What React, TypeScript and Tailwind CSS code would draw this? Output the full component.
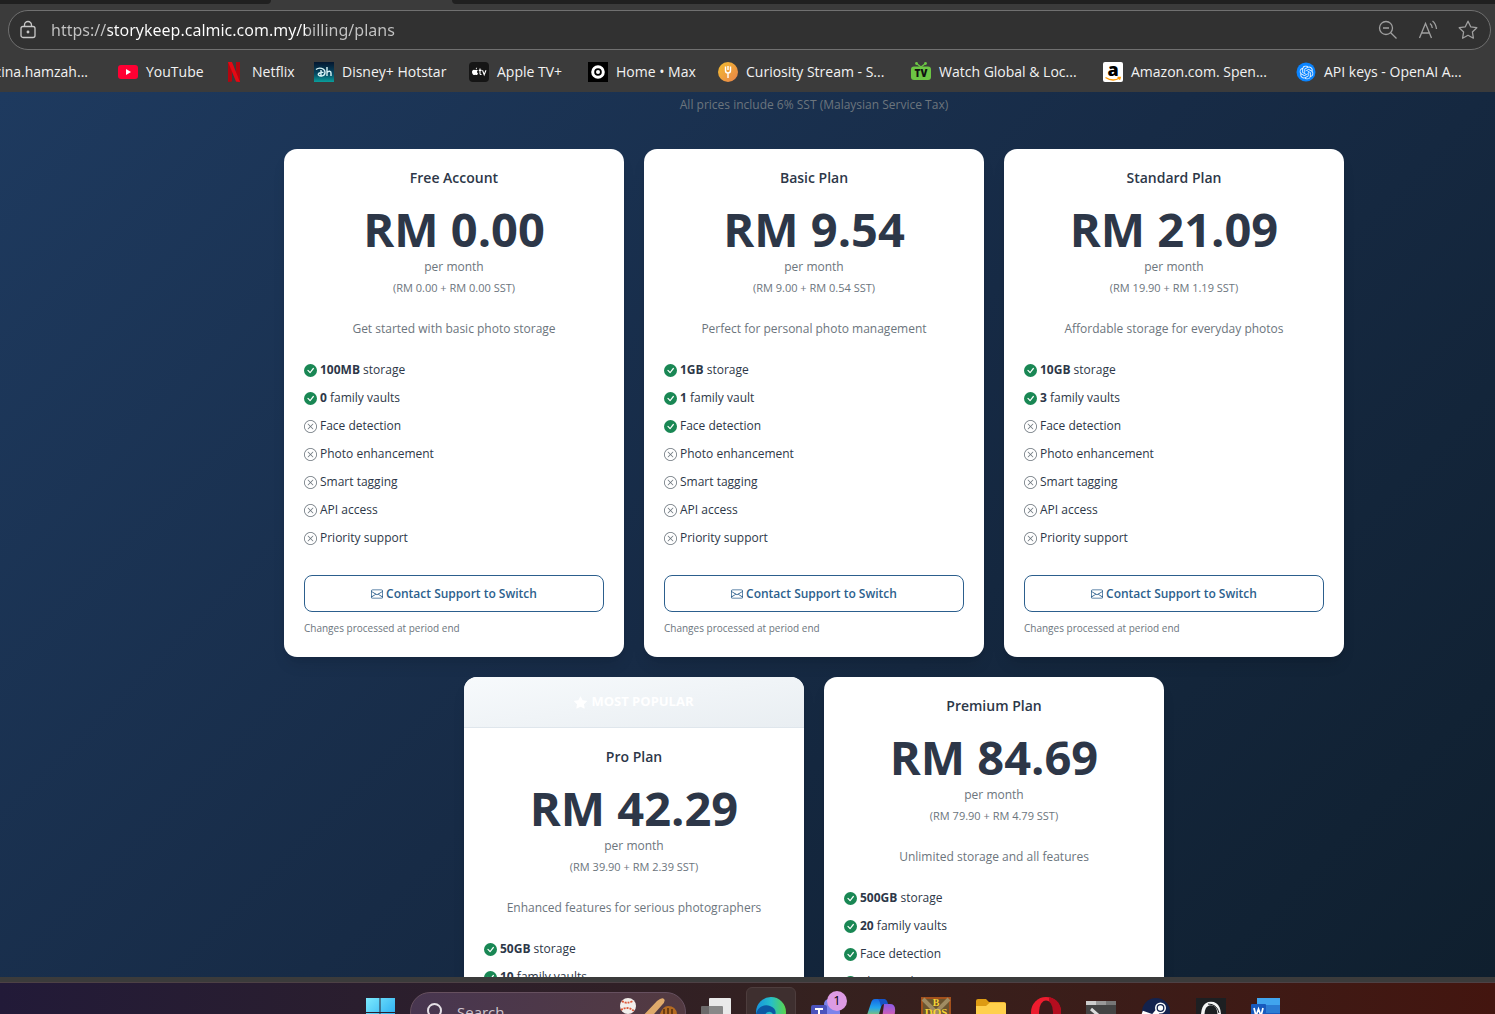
import React from "react";
import { BsCheckCircleFill, BsEnvelope, BsStarFill, BsXCircle } from "react-icons/bs";
import { SiOpenai } from "react-icons/si";

type Feature = { ok: boolean; strong?: string; text: string };
type Plan = { name: string; price: string; split: string; desc: string; popular?: boolean; features: Feature[] };

function features(storage: string, vaults: string, enabled: number): Feature[] {
  const extras = ["Face detection", "Photo enhancement", "Smart tagging", "API access", "Priority support"];
  return [
    { ok: true, strong: storage, text: "storage" },
    { ok: true, strong: vaults, text: vaults === "1" ? "family vault" : "family vaults" },
    ...extras.map((text, i) => ({ ok: i < enabled, text })),
  ];
}

const plans: Plan[] = [
  { name: "Free Account", price: "RM 0.00", split: "(RM 0.00 + RM 0.00 SST)", desc: "Get started with basic photo storage", features: features("100MB", "0", 0) },
  { name: "Basic Plan", price: "RM 9.54", split: "(RM 9.00 + RM 0.54 SST)", desc: "Perfect for personal photo management", features: features("1GB", "1", 1) },
  { name: "Standard Plan", price: "RM 21.09", split: "(RM 19.90 + RM 1.19 SST)", desc: "Affordable storage for everyday photos", features: features("10GB", "3", 0) },
  { name: "Pro Plan", price: "RM 42.29", split: "(RM 39.90 + RM 2.39 SST)", desc: "Enhanced features for serious photographers", popular: true, features: features("50GB", "10", 3) },
  { name: "Premium Plan", price: "RM 84.69", split: "(RM 79.90 + RM 4.79 SST)", desc: "Unlimited storage and all features", features: features("500GB", "20", 5) },
];

function PlanCard({ plan }: { plan: Plan }) {
  return (
    <article className="w-[340px] overflow-hidden rounded-[13px] bg-white shadow-lg">
      {plan.popular && (
        <div className="flex h-[51px] items-center justify-center gap-1 border-b border-[#dfe6ec] bg-linear-to-br from-[#f7fafc] to-[#e9eef2] text-[13px] font-bold text-white">
          <BsStarFill className="size-[13px]" />
          MOST POPULAR
        </div>
      )}
      <div className="px-5 pt-5 pb-[19px] text-center">
        <h2 className="text-[14px] leading-[18px] font-semibold text-[#2d3748]">{plan.name}</h2>
        <p className="mt-[14px] text-[47px] leading-[56px] font-bold text-[#2d3748]">{plan.price}</p>
        <p className="text-[12px] leading-5 text-[#6c757d]">per month</p>
        <p className="mt-px text-[11px] leading-5 text-[#6c757d]">{plan.split}</p>
        <p className="mt-[19px] text-[12px] leading-6 text-[#6c757d]">{plan.desc}</p>
        <ul className="mt-[15px] text-left text-[12px] text-[#2d3748]">
          {plan.features.map((f) => (
            <li key={f.text} className="flex h-7 items-center gap-[3px]">
              {f.ok ? <BsCheckCircleFill className="size-[13px] text-[#198754]" /> : <BsXCircle className="size-[13px] text-[#6c757d]" />}
              <span>
                {f.strong && <strong className="font-bold">{f.strong} </strong>}
                {f.text}
              </span>
            </li>
          ))}
        </ul>
        <button className="mt-[23px] flex h-[37px] w-full items-center justify-center gap-[3px] rounded-[8px] border border-[#2c5f8d] text-[12px] font-semibold text-[#2c5f8d]">
          <BsEnvelope className="size-3" />
          Contact Support to Switch
        </button>
        <p className="mt-[6px] text-left text-[10px] leading-5 text-[#6c757d]">Changes processed at period end</p>
      </div>
    </article>
  );
}

const bookmarks: { label: string; width: string; icon: React.ReactNode }[] = [
  {
    label: "YouTube", width: "w-[86px]",
    icon: <><rect y="3" width="20" height="14" rx="3" fill="#ff0033" /><path d="M8 7l5 3-5 3z" fill="#fff" /></>,
  },
  {
    label: "Netflix", width: "w-[70px]",
    icon: <><path d="M4 0h4v19.500L4 20zM12 0h4v20l-4-.5z" fill="#b1060f" /><path d="M4 0h4l8 20-4-.5z" fill="#e50914" /></>,
  },
  {
    label: "Disney+ Hotstar", width: "w-[135px]",
    icon: (
      <>
        <defs><linearGradient id="dh" x2="0" y2="1"><stop stopColor="#04162f" /><stop offset=".6" stopColor="#054a63" /><stop offset="1" stopColor="#0a9f9c" /></linearGradient></defs>
        <rect width="20" height="20" fill="url(#dh)" />
        <path d="M2 7.500C5 5 11 6 11 10.500c0 4-5 4-6.500 2.500-1-1.500 2-3 5-2.500M7 8v6M13 5v9M13 10.500c1.500-2 4-1.500 4 .5v3" fill="none" stroke="#d8f4f7" strokeWidth="1.400" />
      </>
    ),
  },
  {
    label: "Apple TV+", width: "w-[99px]",
    icon: (
      <>
        <rect width="20" height="20" rx="4" fill="#151515" />
        <path d="M6.700 7.200c.1-1 .7-1.600 1.400-1.700 0 .9-.5 1.600-1.400 1.700zM8 8c-.8-.4-1 .1-1.500.1S5.600 7.700 5 7.700c-1.300 0-2 1-2 2.300 0 1.400 1 3 1.900 3 .5 0 .8-.3 1.400-.3s.8.3 1.300.3c.6 0 1.200-1 1.400-1.600-1.300-.7-1.300-2.400 0-3.100z" fill="#fff" />
        <path d="M11 6.500v5q0 1.300 1.500 1M9.800 8.400h2.800M13.500 8.300l1.700 4.500 1.800-4.500" fill="none" stroke="#fff" strokeWidth="1.100" />
      </>
    ),
  },
  {
    label: "Home • Max", width: "w-[110px]",
    icon: <><rect width="20" height="20" fill="#000" /><circle cx="10" cy="10" r="5.300" fill="none" stroke="#fff" strokeWidth="3" /><circle cx="10" cy="10" r="2" fill="#fff" /></>,
  },
  {
    label: "Curiosity Stream - S...", width: "w-[173px]",
    icon: (
      <>
        <defs><linearGradient id="cs" x2="1" y2="1"><stop stopColor="#f3bd2f" /><stop offset="1" stopColor="#e9824a" /></linearGradient></defs>
        <circle cx="10" cy="10" r="10" fill="url(#cs)" />
        <path d="M7.500 4.500v4q0 2.500 2.500 2.500t2.500-2.500v-4M10 11v5M10 4v4" fill="none" stroke="#fff" strokeWidth="1.400" />
      </>
    ),
  },
  {
    label: "Watch Global & Loc...", width: "w-[172px]",
    icon: (
      <>
        <path d="M10 5L5.500 1.500M10 5l4.500-3.500" stroke="#6cc644" strokeWidth="1.300" />
        <circle cx="5.500" cy="1.500" r="1.400" fill="#6cc644" /><circle cx="14.500" cy="1.500" r="1.400" fill="#6cc644" />
        <rect y="4.500" width="20" height="13.500" rx="3" fill="#6cc644" />
        <text x="10" y="15" textAnchor="middle" fontSize="10" fontWeight="800" fill="#111">TV</text>
      </>
    ),
  },
  {
    label: "Amazon.com. Spen...", width: "w-[173px]",
    icon: (
      <>
        <rect width="20" height="20" rx="2" fill="#fff" />
        <text x="10" y="14" textAnchor="middle" fontSize="18" fontWeight="800" fill="#000">a</text>
        <path d="M2.500 15.500q7 4.500 14 .8M14.500 15.500h2.800l-.8 2.200" fill="none" stroke="#f90" strokeWidth="1.300" />
      </>
    ),
  },
  {
    label: "API keys - OpenAI A...", width: "w-[173px]",
    icon: <><circle cx="10" cy="10" r="9.500" fill="#0a84ff" /><SiOpenai x="3.500" y="3.500" width="13" height="13" color="#e8f4ff" /></>,
  },
];

function Browser() {
  return (
    <header className="shrink-0 bg-[#3b3b3b]">
      <div className="flex h-1 bg-[#3b3b3b]">
        <div className="w-[271px] rounded-br-[6px] bg-[#202020]" />
        <div className="w-[181px]" />
        <div className="flex-1 rounded-bl-[6px] bg-[#202020]" />
      </div>
      <div className="mt-[6px] mr-1 ml-2 flex h-10 items-center rounded-full border border-[#707070] bg-[#313131] pr-3 pl-[10px] text-[#a0a0a0]">
        <button aria-label="Site information" className="text-[#c8c8c8]">
          <svg width="18" height="20" viewBox="0 0 18 20" fill="none" stroke="currentColor" strokeWidth="1.300">
            <rect x="2" y="6.500" width="14" height="11" rx="2" />
            <path d="M5.500 6.500V5a3.500 3.500 0 017 0v1.500" />
            <circle cx="9" cy="12" r=".8" fill="currentColor" />
          </svg>
        </button>
        <input
          aria-label="Address"
          defaultValue="https://storykeep.calmic.com.my/billing/plans"
          className="ml-[14px] min-w-0 flex-1 bg-[linear-gradient(to_right,#c4c4c4_57px,#ffffff_57px,#ffffff_256px,#c4c4c4_256px)] bg-clip-text font-['Noto_Sans',sans-serif] text-[16px] text-transparent caret-white outline-none"
        />
        <div className="flex items-center gap-5">
          <button aria-label="Zoom out">
            <svg width="20" height="20" viewBox="0 0 20 20" fill="none" stroke="currentColor" strokeWidth="1.300">
              <circle cx="8" cy="8" r="6.500" /><path d="M5 8h6M12.700 12.700l5.800 5.800" />
            </svg>
          </button>
          <button aria-label="Read aloud">
            <svg width="20" height="20" viewBox="0 0 20 20" fill="none" stroke="currentColor" strokeWidth="1.300">
              <path d="M1.500 18L7.500 3.500 13.500 18M3.500 13h8M12 3.500q2 1.500 2.300 4.500M14.500 1q3.300 2.500 4 8" />
            </svg>
          </button>
          <button aria-label="Add to favorites">
            <svg width="20" height="20" viewBox="0 0 20 20" fill="none" stroke="currentColor" strokeWidth="1.300" strokeLinejoin="round">
              <path d="M10 1.200l2.700 5.600 6.100.9-4.400 4.300 1 6.200-5.400-2.900-5.400 2.900 1-6.200L1.200 7.700l6.100-.9z" />
            </svg>
          </button>
        </div>
      </div>
      <nav aria-label="Favorites" className="flex h-[42px] gap-5 overflow-hidden pt-px text-[14px] whitespace-nowrap text-[#f2f2f2]">
        <a href="#mail" className="flex w-[98px] shrink-0 items-center justify-end overflow-hidden pr-[10px]">zina.hamzah...</a>
        {bookmarks.map((b) => (
          <a key={b.label} href="#bookmark" className={`flex shrink-0 items-center gap-2 ${b.width}`}>
            <svg width="20" height="20" viewBox="0 0 20 20" className="shrink-0">{b.icon}</svg>
            {b.label}
          </a>
        ))}
      </nav>
    </header>
  );
}

const apps: { name: string; active?: boolean; badge?: string; icon: React.ReactNode }[] = [
  {
    name: "Task View",
    icon: <><rect x="8" y="1" width="22" height="22" rx="1" fill="#e9e9e9" /><rect y="9" width="22" height="20" rx="1" fill="#777" opacity=".85" /></>,
  },
  {
    name: "Edge", active: true,
    icon: (
      <>
        <defs><linearGradient id="edge"><stop stopColor="#1593df" /><stop offset=".5" stopColor="#26bfc9" /><stop offset="1" stopColor="#5bd64b" /></linearGradient></defs>
        <circle cx="15" cy="15" r="15" fill="url(#edge)" />
        <path d="M0 17C2 9 9 7 14 9c6 2 7 7 4 11-1-6-7-7-9-2-2 6 2 11 7 12C7 31 0 25 0 17z" fill="#0c59a4" />
      </>
    ),
  },
  {
    name: "Teams", badge: "1",
    icon: (
      <>
        <circle cx="18" cy="7" r="5" fill="#7b83eb" /><rect x="9" y="11" width="20" height="19" rx="4" fill="#7b83eb" />
        <rect y="8" width="16" height="16" rx="2" fill="#4b53bc" /><path d="M4 12h8M8 12v9" stroke="#fff" strokeWidth="2" />
      </>
    ),
  },
  {
    name: "Copilot",
    icon: (
      <>
        <defs>
          <linearGradient id="cpa" x2="0" y2="1"><stop stopColor="#1668e3" /><stop offset=".35" stopColor="#22a5ed" /><stop offset=".8" stopColor="#b5d334" /></linearGradient>
          <linearGradient id="cpb" x2="0" y2="1"><stop stopColor="#8a5be8" /><stop offset=".7" stopColor="#f0609e" /></linearGradient>
        </defs>
        <path d="M18 7h6q6 0 5 8-2 15-10 14h-8q4-2 5-7z" fill="url(#cpb)" />
        <path d="M9 2h10q-3 2-4 8l-4 14q-1 3-5 3-7 0-5-9L5 6q1-4 4-4z" fill="url(#cpa)" />
        <path d="M12 2h6q3 0 4 5h-4q-2 0-3 3-1-6-3-8z" fill="#1553c7" />
      </>
    ),
  },
  {
    name: "DOSBox",
    icon: (
      <>
        <rect x="1" y="1" width="28" height="28" fill="#6b5530" stroke="#a4511c" strokeWidth="2" />
        <path d="M2 2l26 26M28 2L2 28" stroke="#a08c62" strokeWidth="4" />
        <g fill="#f8d434" fontFamily="Liberation Serif" fontWeight="700" textAnchor="middle"><text x="15" y="9" fontSize="10">B</text><text x="15" y="19" fontSize="11">DOS</text></g>
      </>
    ),
  },
  {
    name: "File Explorer",
    icon: <><path d="M0 4q0-2 2-2h8l3 3h15q2 0 2 2v6H0z" fill="#dd9b13" /><path d="M0 9h10l4-3.500h14q2 0 2 2V28H0z" fill="#ffd04c" /></>,
  },
  {
    name: "Opera",
    icon: <><ellipse cx="15" cy="15" rx="15" ry="15" fill="#ed1c2e" /><path d="M18 0q12 3 12 15T18 30z" fill="#b40d1f" /><ellipse cx="15" cy="15" rx="7" ry="11.500" fill="#3c1a1a" /></>,
  },
  {
    name: "Terminal",
    icon: <><rect y="4" width="30" height="25" rx="1" fill="#444" /><path d="M0 4h10v4H0z" fill="#ccc" /><path d="M10 4h10v4H10z" fill="#999" /><path d="M20 4h10v4H20z" fill="#777" /><path d="M5 12l7 6-7 6" stroke="#ddd" strokeWidth="3" fill="none" /></>,
  },
  {
    name: "Steam",
    icon: (
      <>
        <circle cx="15" cy="15" r="14" fill="#13224d" /><path d="M1 16l11 4 5-6" stroke="#fff" strokeWidth="5" fill="none" />
        <circle cx="19.500" cy="11" r="5.500" fill="#fff" /><circle cx="19.500" cy="11" r="3.300" fill="#fff" stroke="#13224d" strokeWidth="1.300" />
      </>
    ),
  },
  {
    name: "Game launcher",
    icon: (
      <>
        <rect y="1" width="30" height="28" fill="#1d1f22" />
        <path d="M7 25Q5 6.500 15 6.500T23 25" fill="none" stroke="#f5f5f5" strokeWidth="3.500" />
        <path d="M12 7q9 0 11 9" stroke="#1d1f22" fill="none" />
      </>
    ),
  },
  {
    name: "Word",
    icon: <><path d="M6 1h23v7H6z" fill="#41a5ee" /><path d="M6 8h23v8H6z" fill="#2b7cd3" /><path d="M6 16h23v13H6z" fill="#185abd" /><rect y="7" width="15" height="16" rx="1" fill="#185abd" /><path d="M3 11l2 8 2.500-7 2.500 7 2-8" stroke="#fff" strokeWidth="1.700" fill="none" /></>,
  },
];

function Taskbar() {
  return (
    <footer className="h-[37px] shrink-0 overflow-hidden border-t-[5px] border-[#3b3b3b]">
      <div className="flex h-[60px] justify-center gap-[5px] border-t border-[#4d4145] bg-linear-to-r from-[#221a38] via-[#35211f] via-55% to-[#43150f] pt-1 pl-[151px]">
        <button aria-label="Start" className="flex size-[50px] items-center justify-center">
          <svg width="30" height="30" viewBox="0 0 30 30">
            <defs><linearGradient id="win" x2="1" y2="1"><stop stopColor="#7ceafd" /><stop offset="1" stopColor="#1aa0ee" /></linearGradient></defs>
            <path d="M1 1h13.500v14H1zM15.500 1H30v14H15.500zM1 16h13.500v14H1zM15.500 16H30v14H15.500z" fill="url(#win)" />
          </svg>
        </button>
        <div className="mt-[5px] flex h-10 w-[276px] items-center rounded-full border border-[#66505f] bg-linear-to-r from-[#483650] to-[#533a41] pr-1 pl-[14px]">
          <svg width="18" height="18" viewBox="0 0 18 18" fill="none" stroke="#e5e0e6" strokeWidth="2"><circle cx="9.500" cy="7.500" r="6.500" /><path d="M5 12l-4 4.500" /></svg>
          <input aria-label="Search" placeholder="Search" className="ml-[14px] min-w-0 flex-1 bg-transparent text-[15px] outline-none placeholder:text-[#cfc4cd]" />
          <svg width="66" height="36" viewBox="0 0 66 36" className="shrink-0">
            <circle cx="13" cy="12" r="8" fill="#f2efec" />
            <path d="M7 7q4 3.500 11 0M6 16q6-4.500 13 1" fill="none" stroke="#dd5a3b" strokeWidth="1.800" strokeDasharray="2 1" />
            <path d="M24 26L42 7q5-4 7-2t-2 6L32 28z" fill="#dfaa6b" />
            <path d="M38 32q2-8 7-12 3-8 8-8 8 0 9 8v14z" fill="#b56b21" />
            <path d="M49 15v7M53 14v8M57 15v7" stroke="#5c3210" strokeWidth="1.600" />
          </svg>
        </div>
        {apps.map((a) => (
          <button
            key={a.name}
            aria-label={a.name}
            className={`relative flex size-[50px] shrink-0 items-center justify-center rounded-md border ${a.active ? "border-[#4d3d3d] bg-[#3e2f2f]" : "border-transparent"}`}
          >
            <svg width="30" height="30" viewBox="0 0 30 30">{a.icon}</svg>
            {a.badge && (
              <span className="absolute top-[3px] right-[3px] flex size-5 items-center justify-center rounded-full bg-[#dd9be4] text-[13px] text-black">{a.badge}</span>
            )}
          </button>
        ))}
      </div>
    </footer>
  );
}

export default function App() {
  return (
    <div className="flex h-screen flex-col overflow-hidden font-['Open_Sans','Noto_Sans',sans-serif]">
      <Browser />
      <main className="min-h-0 flex-1 overflow-hidden bg-linear-[135deg,#1e3a5f_0%,#172b46_50%,#0f1f2e_100%] pl-[133px]">
        <p className="pt-[3px] text-center text-[12px] leading-5 text-[#6c757d]">All prices include 6% SST (Malaysian Service Tax)</p>
        <div className="mx-auto mt-[34px] flex max-w-[1100px] flex-wrap items-start justify-center gap-5">
          {plans.map((p) => <PlanCard key={p.name} plan={p} />)}
        </div>
      </main>
      <Taskbar />
    </div>
  );
}
